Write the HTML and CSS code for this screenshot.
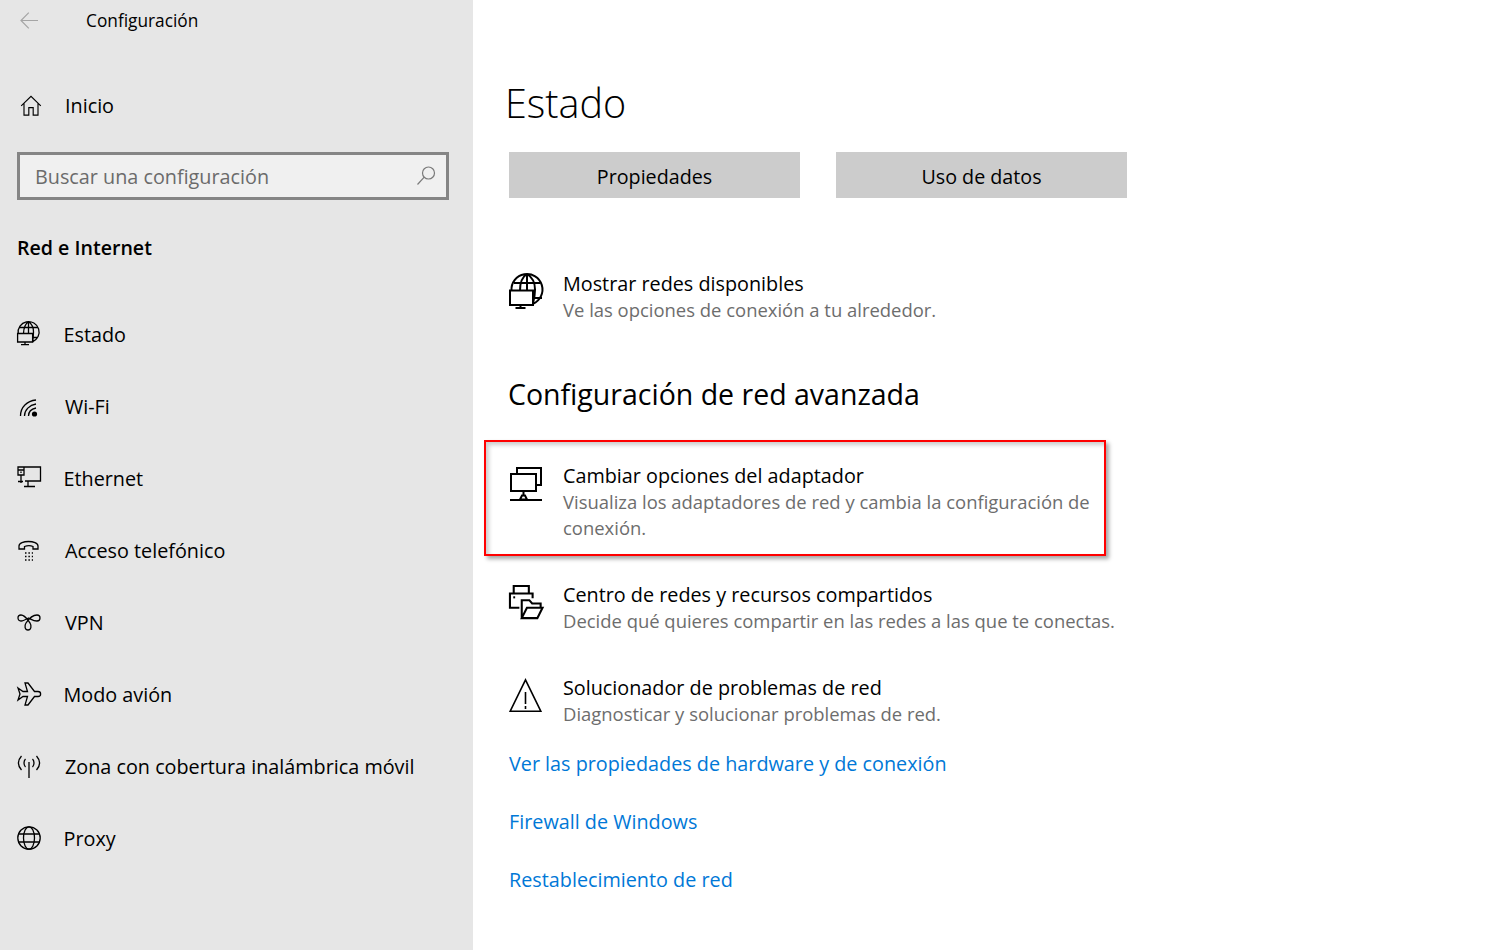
FILE: index.html
```html
<!DOCTYPE html>
<html lang="es">
<head>
<meta charset="utf-8">
<title>Configuración</title>
<link rel="stylesheet" href="styles.css">
</head>
<body>
<div class="app">
  <aside class="sidebar">
    <header class="titlebar">
      <svg class="back" viewBox="0 0 18 17"><path d="M18 8.500H1M8.800 .6 1 8.500l7.800 7.900"/></svg>
      <span class="apptitle">Configuración</span>
    </header>
    <a class="home">
      <svg class="ico" viewBox="0 0 24 24"><path d="M.8 12.500 12 1.500l11.200 11M4 9.500V23h5.500v-8.500h5V23H20V9.500"/></svg>
      <span>Inicio</span>
    </a>
    <div class="search">
      <span class="placeholder">Buscar una configuración</span>
      <svg class="searchico" viewBox="0 0 20 20"><circle cx="12.500" cy="7" r="6"/><path d="M8.200 11.200 1.500 18.500"/></svg>
    </div>
    <h2 class="section">Red e Internet</h2>
    <nav class="nav">
      <a class="item">
        <svg class="ico" viewBox="0 0 24 24"><path d="M1.200 11.500A10.500 10.500 0 1 1 15.500 19.800M2.500 5.500h18M11.500-.5C8 2 6.700 6 6.500 11.500M11.500-.5v12M11.500-.5C15 2 16.500 6 16.500 10c0 4-.5 7-1 10M15.500 15.500H21"/><path d="M.6 11.500h15V20H.6zM8 20v2.500M4 22.700h8"/></svg>
        <span>Estado</span>
      </a>
      <a class="item wide">
        <svg class="ico" viewBox="0 0 24 24"><path d="M3.500 22C3.500 13 10 7 19 6M7.500 22c0-6 5-11 11.500-12M11.500 22c0-4 3-7 7.500-8"/><circle cx="17.500" cy="20" r="2.600" class="solid"/></svg>
        <span>Wi-Fi</span>
      </a>
      <a class="item">
        <svg class="ico" viewBox="0 0 24 24"><path d="M7 1h16.500v14H8M1 1h6v8H1zM1 4h6M4 5.500v1.500M4 9v8M1 15.500h5M11 15.500v4.500M7 20.500h11"/></svg>
        <span>Ethernet</span>
      </a>
      <a class="item wide">
        <svg class="ico" viewBox="0 0 24 24"><path d="M2 11V8c0-6 19-6 19 0v3h-5V8.500c-2-1-6-1-8.500 0V11z"/><path class="dots" d="M8 15h8M8 18.500h8M8 22h8"/></svg>
        <span>Acceso telefónico</span>
      </a>
      <a class="item wide">
        <svg class="ico" viewBox="0 0 24 24"><path d="M4 5C8 5 10 9 13 13C15 16 14 20 11 20C8 20 7 16 9 13C11 10 15 5 20 5C24 5 24 11 20 11C16 11 14 9 11.500 8C8 10 6 11 4 11C0 11 0 5 4 5"/></svg>
        <span>VPN</span>
      </a>
      <a class="item">
        <svg class="ico" viewBox="0 0 24 24"><path d="M1 6 6 9.500h4.500L8 1h3l6.500 8.500H21c3.500 0 3.500 5 0 5h-3.500L11 23H8l2.500-8.500H6L1 18l2-6z"/></svg>
        <span>Modo avión</span>
      </a>
      <a class="item wide">
        <svg class="ico" viewBox="0 0 24 24"><path d="M12 8v16M4.500 2C.5 6.500.5 11.500 4.500 16M8.500 5c-2 2-2 6 0 8M19.500 2c4 4.500 4 9.500 0 14M15.500 5c2 2 2 6 0 8"/></svg>
        <span>Zona con cobertura inalámbrica móvil</span>
      </a>
      <a class="item">
        <svg class="ico" viewBox="0 0 24 24"><circle cx="12" cy="12" r="11.200"/><ellipse cx="12" cy="12" rx="5.500" ry="11.200"/><path d="M1.500 8h21M1.500 16h21"/></svg>
        <span>Proxy</span>
      </a>
    </nav>
  </aside>

  <main class="content">
    <h1 class="title">Estado</h1>
    <div class="buttons">
      <button class="btn">Propiedades</button>
      <button class="btn">Uso de datos</button>
    </div>

    <a class="row first">
      <svg class="rowico" viewBox="0 0 34 36"><path d="M2.500 16.500A15.500 15.500 0 1 1 24 29.800M5 9h26M18 0C13 3 11 9 11 16.500M18 0v16.500M18 0c5 3 8 9 8 15.500 0 5-1 10-2 14M24 24h9"/><path d="M1 16.500h23V31H1zM11.500 31v3M6.500 34h10"/></svg>
      <span class="rowtext"><span class="rowhead">Mostrar redes disponibles</span><span class="rowsub">Ve las opciones de conexión a tu alrededor.</span></span>
    </a>

    <h2 class="subtitle">Configuración de red avanzada</h2>

    <a class="row boxed">
      <svg class="rowico" viewBox="0 0 34 36"><path d="M8 8V2h24v17h-5"/><path d="M2 8h25v17H2z"/><path d="M14.500 25v4M11 33.500l2-4h3l2 4zM1 34h32"/></svg>
      <span class="rowtext"><span class="rowhead">Cambiar opciones del adaptador</span><span class="rowsub">Visualiza los adaptadores de red y cambia la configuración de conexión.</span></span>
    </a>

    <a class="row shared">
      <svg class="rowico wider" viewBox="0 0 36 38"><path d="M5 9V1h16v8M11 24H1V9h24v5"/><path d="M4.500 13h2"/><path d="M13.500 35V16h8l3 3.500h9V24M13.500 35H30l5.500-11H19z"/></svg>
      <span class="rowtext"><span class="rowhead">Centro de redes y recursos compartidos</span><span class="rowsub">Decide qué quieres compartir en las redes a las que te conectas.</span></span>
    </a>

    <a class="row trouble">
      <svg class="rowico warn" viewBox="0 0 34 36"><path d="M16.500 1.800 1.200 33.200h30.600z"/><path d="M16.500 14v12M16.500 28v3"/></svg>
      <span class="rowtext"><span class="rowhead">Solucionador de problemas de red</span><span class="rowsub">Diagnosticar y solucionar problemas de red.</span></span>
    </a>

    <div class="links">
      <a class="link">Ver las propiedades de hardware y de conexión</a>
      <a class="link">Firewall de Windows</a>
      <a class="link">Restablecimiento de red</a>
    </div>
  </main>
</div>
</body>
</html>
```

FILE: styles.css
```css
* { box-sizing: border-box; }
html, body { margin: 0; height: 100%; }
body {
  font-family: "Open Sans", "Noto Sans", "Liberation Sans", sans-serif;
  color: #000;
  background: #fff;
  overflow: hidden;
}
.app { display: flex; height: 950px; }

.sidebar {
  width: 473px;
  flex: none;
  background: #e6e6e6;
  padding-left: 17px;
}
.titlebar { display: flex; align-items: center; height: 40px; }
.back { width: 18px; height: 17px; margin-left: 3px; fill: none; stroke: #a5a5a5; stroke-width: 1.200; }
.apptitle { margin-left: 48px; font-size: 17.300px; }
.home {
  display: flex; align-items: center;
  height: 50px; margin-top: 40px;
  font-size: 19.800px;
}
.home .ico { width: 22px; height: 21px; margin-left: 3px; }
.home span { margin-left: 23px; }
.ico { width: 24px; height: 24px; flex: none; overflow: visible; fill: none; stroke: #000; stroke-width: 1.300; }
.ico .solid { fill: #000; stroke: none; }
.ico .dots { stroke-dasharray: 1.500 1.900; }

.search {
  display: flex; align-items: center; justify-content: space-between;
  width: 432px; height: 48px; margin-top: 22px;
  padding: 0 10px 0 15px;
  background: #f0f0f0;
  border: 3px solid #858585;
  font-size: 19.800px;
  color: #6b6b6b;
}
.searchico { width: 20px; height: 20px; fill: none; stroke: #7a7a7a; stroke-width: 1.200; }
.section { margin: 29px 0 0; height: 37px; font-size: 19.600px; font-weight: 600; line-height: 37px; }
.nav { display: flex; flex-direction: column; margin-top: 32px; }
.item { display: flex; align-items: center; height: 72px; font-size: 19.800px; }
.item span { margin-left: 22.500px; }
.item.wide span { margin-left: 24px; }

.content { flex: 1; padding: 70px 0 0 36px; }
.title { margin: 0 0 0 -4px; font-size: 39.600px; font-weight: 300; line-height: 66px; }
.buttons { display: flex; gap: 36px; margin-top: 16px; }
.btn {
  width: 291px; height: 46px;
  border: 0; padding: 2px 0 0;
  background: #cccccc;
  color: #000;
  font: inherit;
  font-size: 19.700px;
}
.row { display: flex; color: #000; }
.rowico { width: 34px; height: 36px; flex: none; margin-top: 3px; overflow: visible; fill: none; stroke: #000; stroke-width: 2; }
.rowico.warn { stroke-width: 1.600; }
.rowico.wider { stroke-width: 2.200; }
.rowtext { display: block; margin-left: 20px; width: 560px; }
.rowhead, .rowsub { display: block; line-height: 26px; }
.rowhead { font-size: 19.800px; }
.rowsub { font-size: 18.450px; color: #6d6d6d; }
.first { margin-top: 73px; }
.subtitle { margin: 50px 0 0 -1px; font-size: 28.500px; font-weight: 400; line-height: 42px; }
.boxed {
  width: 622px; height: 116px;
  margin: 25px 0 0 -25px;
  padding: 21px 8px 0 23px;
  border: 2px solid #ff0000;
  box-shadow: 3px 3px 4px rgba(0,0,0,.35), inset 3px 3px 4px rgba(0,0,0,.2);
}
.shared { margin-top: 26px; }
.trouble { margin-top: 41px; }
.links { display: flex; flex-direction: column; gap: 24px; margin-top: 20px; }
.link { font-size: 19.800px; line-height: 34px; color: #0078d7; }
```
